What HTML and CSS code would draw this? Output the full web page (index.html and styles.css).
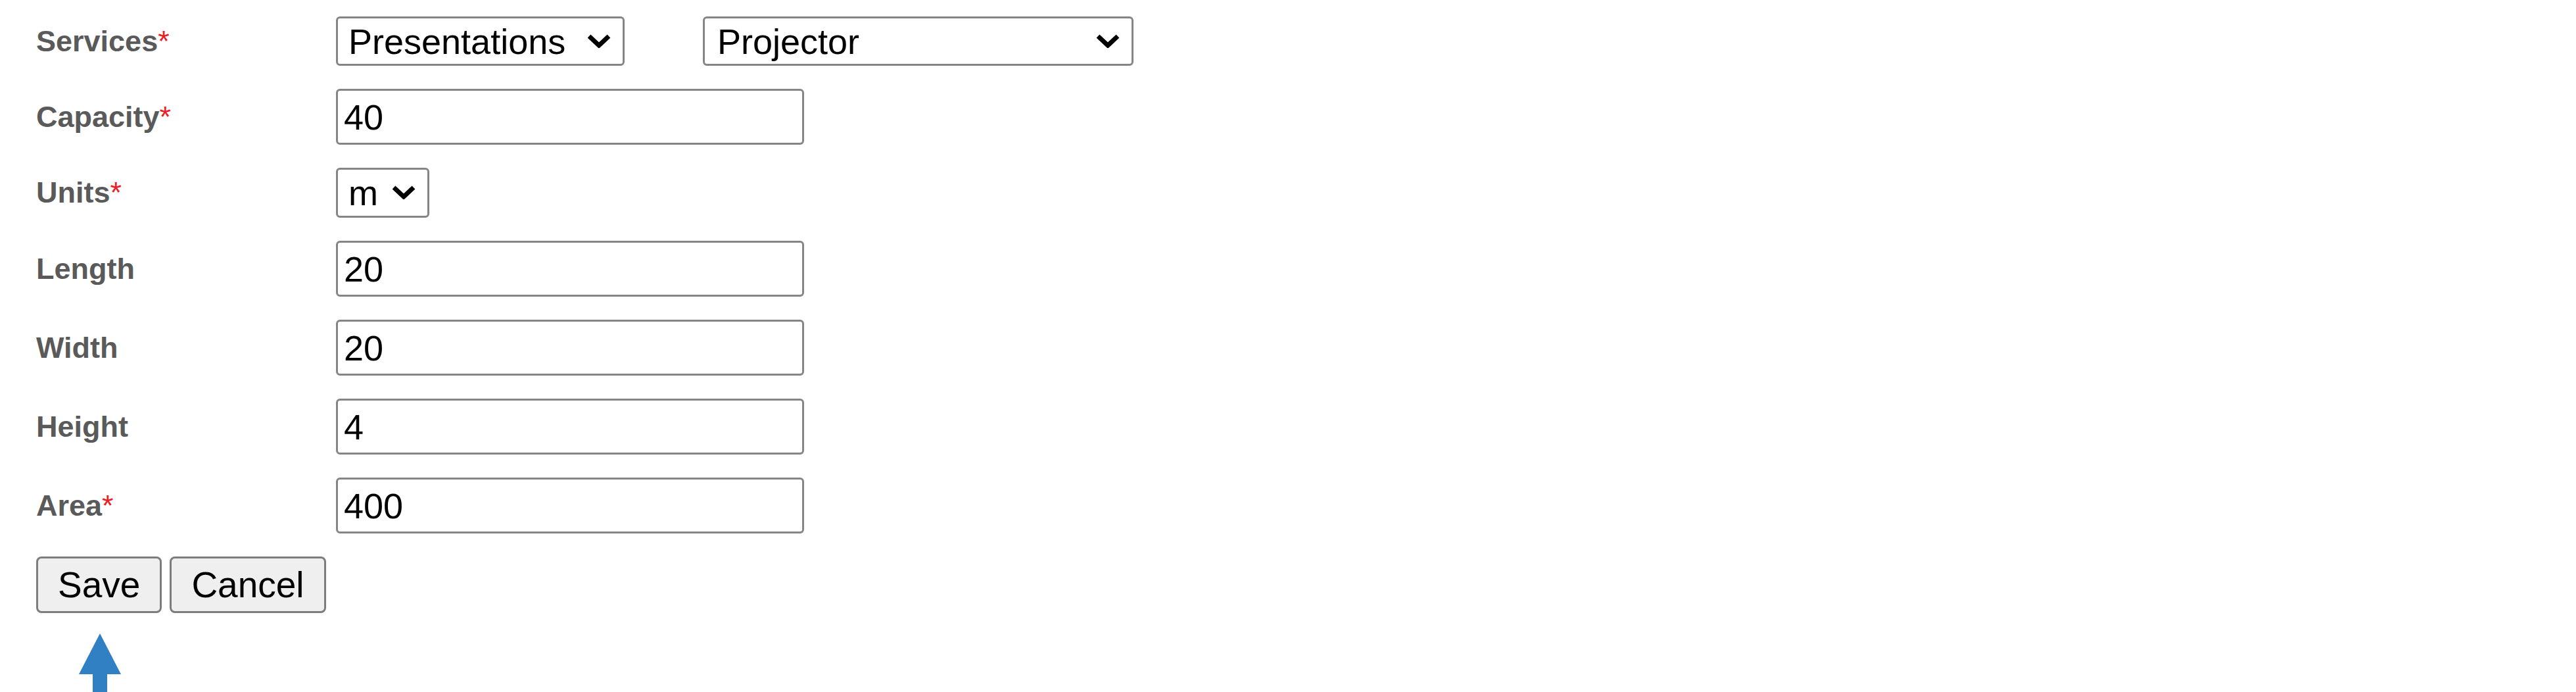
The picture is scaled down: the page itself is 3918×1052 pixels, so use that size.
FILE: index.html
```html
<!DOCTYPE html>
<html lang="en">
<head>
  <meta charset="UTF-8">
  <meta name="viewport" content="width=device-width, initial-scale=1.0">
  <title>Edit Room</title>
  <link rel="stylesheet" href="styles.css">
</head>
<body>
  <form class="room-form">
    <div class="row">
      <label class="lbl" for="service">Services<span class="req">*</span></label>
      <span class="pick pick-service">
        <select id="service">
          <option>Presentations</option>
        </select>
        <svg class="chev" viewBox="0 0 38 22"><polyline points="4,4 19,18 34,4"/></svg>
      </span>
      <span class="pick pick-extra">
        <select id="extra">
          <option>Projector</option>
        </select>
        <svg class="chev" viewBox="0 0 38 22"><polyline points="4,4 19,18 34,4"/></svg>
      </span>
    </div>

    <div class="row">
      <label class="lbl" for="capacity">Capacity<span class="req">*</span></label>
      <input type="text" id="capacity" value="40">
    </div>

    <div class="row">
      <label class="lbl" for="units">Units<span class="req">*</span></label>
      <span class="pick pick-units">
        <select id="units">
          <option>m</option>
        </select>
        <svg class="chev" viewBox="0 0 38 22"><polyline points="4,4 19,18 34,4"/></svg>
      </span>
    </div>

    <div class="row">
      <label class="lbl" for="length">Length</label>
      <input type="text" id="length" value="20">
    </div>

    <div class="row">
      <label class="lbl" for="width">Width</label>
      <input type="text" id="width" value="20">
    </div>

    <div class="row">
      <label class="lbl" for="height">Height</label>
      <input type="text" id="height" value="4">
    </div>

    <div class="row">
      <label class="lbl" for="area">Area<span class="req">*</span></label>
      <input type="text" id="area" value="400">
    </div>

    <div class="actions">
      <button type="submit">Save</button>
      <button type="button">Cancel</button>
    </div>

    <svg class="pointer" viewBox="0 0 64 92">
      <polygon points="32,0 64,62 43,62 43,92 21,92 21,62 0,62"/>
    </svg>
  </form>
</body>
</html>
```

FILE: styles.css
```css
body {
  margin: 0;
  background: #fff;
  font-family: "Liberation Sans", Arial, sans-serif;
}
.room-form {
  padding: 25px 0 0 55px;
}
.row {
  display: flex;
  align-items: center;
  margin-bottom: 35px;
}
.lbl {
  flex: none;
  width: 456px;
  font-size: 45px;
  font-weight: bold;
  color: #5a5a5a;
}
.req {
  font-weight: normal;
  color: #ee1c24;
}
input {
  box-sizing: border-box;
  width: 712px;
  height: 85px;
  padding: 0 9px;
  border: 3px solid #858585;
  border-radius: 6px;
  font-family: "Liberation Sans", Arial, sans-serif;
  font-size: 54px;
  color: #000;
}
.pick {
  position: relative;
  display: inline-block;
}
.pick select {
  -webkit-appearance: none;
  appearance: none;
  box-sizing: border-box;
  height: 75px;
  padding: 0 70px 0 16px;
  border: 3px solid #858585;
  border-radius: 6px;
  background: #fff;
  font-family: "Liberation Sans", Arial, sans-serif;
  font-size: 54px;
  color: #000;
}
.pick-service select {
  width: 439px;
}
.pick-extra {
  margin-left: 119px;
}
.pick-extra select {
  width: 655px;
  padding-left: 19px;
}
.pick-units select {
  width: 142px;
  height: 76px;
}
.chev {
  position: absolute;
  right: 20px;
  top: 26px;
  width: 38px;
  height: 22px;
  pointer-events: none;
  fill: none;
  stroke: #000;
  stroke-width: 7;
}
.actions {
  display: flex;
  gap: 12px;
}
button {
  box-sizing: border-box;
  height: 86px;
  padding: 0 30px;
  border: 3px solid #7d7d7d;
  border-radius: 8px;
  background: #efefef;
  font-family: "Liberation Sans", Arial, sans-serif;
  font-size: 55px;
  color: #000;
}
.pointer {
  display: block;
  width: 64px;
  height: 92px;
  margin: 31px 0 0 65px;
  fill: #3180c3;
}
```
